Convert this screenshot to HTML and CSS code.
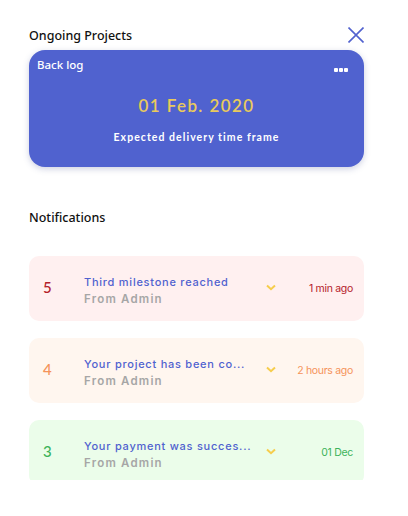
FILE: index.html
```html
<!DOCTYPE html>
<html>
<head>
<meta charset="utf-8">
<link rel="stylesheet" href="styles.css">
</head>
<body>
<div class="panel">
  <div class="header">
    <h2 class="section-title">Ongoing Projects</h2>
    <svg class="close" width="16" height="16" viewBox="0 0 16 16"><path d="M0.5 0.5 L15.5 15.5 M15.5 0.5 L0.5 15.5" stroke="#5262cf" stroke-width="1.6" fill="none"/></svg>
  </div>
  <div class="project-card">
    <div class="project-top">
      <span class="project-name">Back log</span>
      <span class="dots"><i></i><i></i><i></i></span>
    </div>
    <div class="project-date">01 Feb. 2020</div>
    <div class="project-sub">Expected delivery time frame</div>
  </div>

  <h2 class="section-title notif-title">Notifications</h2>

  <div class="list">
    <div class="notif red">
      <span class="num">5</span>
      <div class="text">
        <div class="msg">Third milestone reached</div>
        <div class="from">From Admin</div>
      </div>
      <svg class="chev" width="10" height="7" viewBox="0 0 10 7"><path d="M1 1.5 L5 5.2 L9 1.5" stroke="#f6cd4c" stroke-width="2" fill="none"/></svg>
      <span class="time">1 min ago</span>
    </div>
    <div class="notif orange">
      <span class="num">4</span>
      <div class="text">
        <div class="msg">Your project has been co...</div>
        <div class="from">From Admin</div>
      </div>
      <svg class="chev" width="10" height="7" viewBox="0 0 10 7"><path d="M1 1.5 L5 5.2 L9 1.5" stroke="#f6cd4c" stroke-width="2" fill="none"/></svg>
      <span class="time">2 hours ago</span>
    </div>
    <div class="notif green">
      <span class="num">3</span>
      <div class="text">
        <div class="msg">Your payment was succes...</div>
        <div class="from">From Admin</div>
      </div>
      <svg class="chev" width="10" height="7" viewBox="0 0 10 7"><path d="M1 1.5 L5 5.2 L9 1.5" stroke="#f6cd4c" stroke-width="2" fill="none"/></svg>
      <span class="time">01 Dec</span>
    </div>
  </div>
</div>
</body>
</html>
```

FILE: styles.css
```css
html, body {
  margin: 0;
  padding: 0;
  background: #ffffff;
}
.panel {
  width: 335px;
  padding: 27px 0 0 29px;
  font-family: "Noto Sans", sans-serif;
}
.header {
  display: flex;
  justify-content: space-between;
  align-items: flex-start;
  height: 16px;
}
.section-title {
  margin: 0;
  font-family: "Noto Sans", sans-serif;
  font-weight: 500;
  font-size: 12.5px;
  line-height: 16px;
  color: #111111;
  padding-top: 1px;
}
.close {
  display: block;
}
.project-card {
  margin-top: 7px;
  height: 117px;
  box-sizing: border-box;
  border-radius: 16px;
  background: #5062cf;
  box-shadow: 0 2px 6px rgba(60, 70, 140, 0.25);
  padding: 8px 16px 0 8px;
  color: #ffffff;
}
.project-top {
  display: flex;
  justify-content: space-between;
  align-items: flex-start;
  height: 16px;
}
.project-name {
  font-family: "Noto Sans", sans-serif;
  font-size: 11.5px;
  line-height: 14px;
  font-weight: 500;
}
.dots {
  display: flex;
  gap: 1px;
  margin-top: 10px;
}
.dots i {
  display: block;
  width: 4px;
  height: 4px;
  background: #ffffff;
  border-radius: 1px;
}
.project-date {
  margin-top: 22px;
  text-align: center;
  font-family: "Lato", sans-serif;
  font-size: 17px;
  line-height: 20px;
  font-weight: 600;
  letter-spacing: 1.4px;
  color: #e9ca5c;
  padding-left: 8px;
}
.project-sub {
  margin-top: 15px;
  text-align: center;
  font-family: "Lato", sans-serif;
  font-size: 10.5px;
  font-weight: 700;
  letter-spacing: 1.05px;
  line-height: 12px;
  padding-left: 8px;
}
.notif-title {
  margin-top: 42px;
}
.list {
  margin-top: 30px;
  height: 224px;
  overflow: hidden;
  display: flex;
  flex-direction: column;
  gap: 17px;
}
.notif {
  flex: none;
  height: 65px;
  border-radius: 10px;
  display: flex;
  align-items: center;
  box-sizing: border-box;
  padding: 0 11px 0 14px;
}
.notif.red { background: #fff0f0; }
.notif.orange { background: #fff6ef; }
.notif.green { background: #ebfdea; }
.num {
  width: 41px;
  font-family: "Lato", sans-serif;
  font-size: 15px;
  font-weight: 500;
  margin-top: -3px;
}
.red .num, .red .time { color: #b4202a; }
.orange .num, .orange .time { color: #f5935a; }
.green .num, .green .time { color: #3db35a; }
.text {
  width: 182px;
  margin-top: 4px;
}
.msg {
  font-family: "Inter", sans-serif;
  font-size: 11px;
  font-weight: 500;
  letter-spacing: 0.75px;
  line-height: 15px;
  color: #5062cf;
  white-space: nowrap;
}
.from {
  margin-top: 2px;
  font-family: "Inter", sans-serif;
  font-size: 11.5px;
  font-weight: 600;
  letter-spacing: 1.2px;
  line-height: 14px;
  color: #a6a6a6;
}
.chev {
  display: block;
  margin-top: -3px;
}
.time {
  flex: 1;
  text-align: right;
  font-family: "Inter", sans-serif;
  font-size: 10.5px;
  letter-spacing: -0.3px;
  margin-top: -1px;
}
```
